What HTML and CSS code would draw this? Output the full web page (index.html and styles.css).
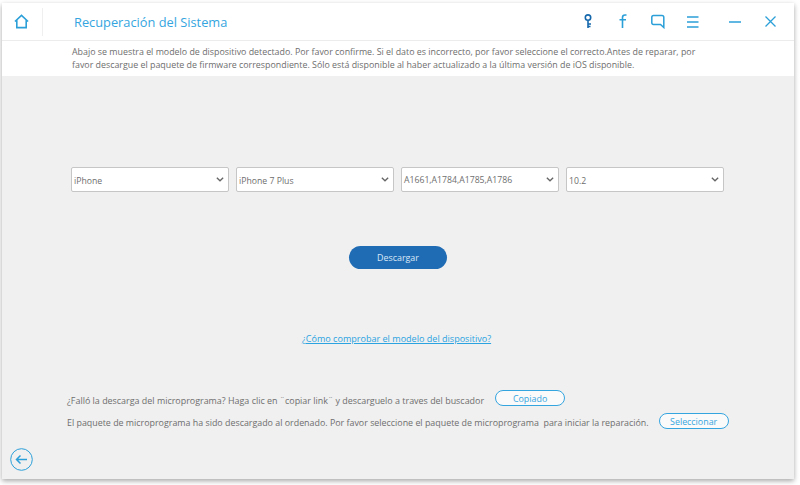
FILE: index.html
```html
<!DOCTYPE html>
<html lang="es">
<head>
<meta charset="utf-8">
<title>Recuperación del Sistema</title>
<link rel="stylesheet" href="styles.css">
</head>
<body>
<div class="window">
  <header class="topbar">
    <div class="home">
      <svg width="15" height="15" viewBox="0 0 16 16" fill="none" stroke="#2b9fd8" stroke-width="1.7"><path d="M1 8 L8 1.5 L15 8 M3 6.5 V14.5 H13 V6.5"/></svg>
    </div>
    <h1 class="title">Recuperación del Sistema</h1>
    <nav class="tools">
      <svg class="t-key" width="10" height="15" viewBox="0 0 10 15" fill="none" stroke="#1668ad" stroke-width="1.6"><circle cx="5" cy="3.6" r="2.7"/><path d="M5 6.5 V14 M5 10 H8 M5 12.5 H7.5"/></svg>
      <svg class="t-f" width="9" height="15" viewBox="0 0 9 15" fill="none" stroke="#2b9fd8" stroke-width="1.6"><path d="M7.5 1 H6 Q3.5 1 3.5 3.5 V14 M0.5 5.8 H7"/></svg>
      <svg class="t-chat" width="14" height="15" viewBox="0 0 14 15" fill="none" stroke="#2b9fd8" stroke-width="1.5"><path d="M2.5 1.5 H11 Q12.8 1.5 12.8 3.3 V13.5 L9.5 10.5 H2.5 Q.8 10.5 .8 8.8 V3.3 Q.8 1.5 2.5 1.5 Z"/></svg>
      <svg class="t-menu" width="12" height="12" viewBox="0 0 12 12" stroke="#2b9fd8" stroke-width="1.4"><path d="M0 1 H11.5 M0 6 H11.5 M0 11 H11.5"/></svg>
      <svg class="t-min" width="12" height="2" viewBox="0 0 12 2" stroke="#2b9fd8" stroke-width="1.5"><path d="M0 1 H12"/></svg>
      <svg class="t-close" width="11" height="11" viewBox="0 0 11 11" stroke="#2b9fd8" stroke-width="1.3"><path d="M.5 .5 L10.5 10.5 M10.5 .5 L.5 10.5"/></svg>
    </nav>
  </header>
  <p class="intro">Abajo se muestra el modelo de dispositivo detectado. Por favor confirme. Si el dato es incorrecto, por favor seleccione el correcto.Antes de reparar, por favor descargue el paquete de firmware correspondiente. Sólo está disponible al haber actualizado a la última versión de iOS disponible.</p>
  <main class="content">
    <div class="selects">
      <div class="select"><span>iPhone</span><svg class="chev" width="8" height="5" viewBox="0 0 9 6" fill="none" stroke="#666" stroke-width="1.6"><path d="M.7 1 L4.5 4.6 L8.3 1"/></svg></div>
      <div class="select"><span>iPhone 7 Plus</span><svg class="chev" width="8" height="5" viewBox="0 0 9 6" fill="none" stroke="#666" stroke-width="1.6"><path d="M.7 1 L4.5 4.6 L8.3 1"/></svg></div>
      <div class="select"><span class="model">A1661,A1784,A1785,A1786</span><svg class="chev" width="8" height="5" viewBox="0 0 9 6" fill="none" stroke="#666" stroke-width="1.6"><path d="M.7 1 L4.5 4.6 L8.3 1"/></svg></div>
      <div class="select"><span>10.2</span><svg class="chev" width="8" height="5" viewBox="0 0 9 6" fill="none" stroke="#666" stroke-width="1.6"><path d="M.7 1 L4.5 4.6 L8.3 1"/></svg></div>
    </div>
    <div class="download"><button class="btn-primary">Descargar</button></div>
    <div class="help"><a href="#">¿Cómo comprobar el modelo del dispositivo?</a></div>
    <div class="row row-first"><span>¿Falló la descarga del microprograma? Haga clic en ¨copiar link¨ y descarguelo a traves del buscador</span><button class="btn-outline btn-copy">Copiado</button></div>
    <div class="row row-second"><span>El paquete de microprograma ha sido descargado al ordenado. Por favor seleccione el paquete de microprograma&nbsp; para iniciar la reparación.</span><button class="btn-outline btn-pick">Seleccionar</button></div>
    <div class="back">
      <svg width="23" height="23" viewBox="0 0 23 23" fill="none" stroke="#2b9fd8"><circle cx="11.5" cy="11.5" r="10.8" stroke-width="1"/><path d="M17 11.5 H6.5 M10.5 7.5 L6.5 11.5 L10.5 15.5" stroke-width="1.5"/></svg>
    </div>
  </main>
</div>
</body>
</html>
```
FILE: styles.css
```css
* { box-sizing: border-box; }
html, body { margin: 0; height: 100%; }
body {
  background: #fff;
  font-family: "Open Sans", sans-serif;
  color: #6e6e6e;
  padding: 3px 6px 6px 2px;
  overflow: hidden;
}
.window {
  height: 476px;
  display: flex;
  flex-direction: column;
  background: #fff;
  box-shadow: 0 2px 5px rgba(0,0,0,.35);
}
.topbar {
  height: 38px;
  flex: none;
  display: flex;
  align-items: center;
  border-bottom: 1px solid #ececec;
}
.home {
  width: 41px;
  height: 28px;
  flex: none;
  display: flex;
  align-items: center;
  padding-left: 12px;
  border-right: 1px solid #efefef;
}
.title {
  margin: 0 0 0 31px;
  font-size: 12.8px;
  font-weight: 400;
  color: #35a5e0;
}
.tools {
  margin-left: auto;
  display: flex;
  align-items: center;
  padding-right: 18px;
}
.t-f { margin-left: 26px; }
.t-chat { margin-left: 23.5px; }
.t-menu { margin-left: 22px; }
.t-min { margin-left: 30px; }
.t-close { margin-left: 24px; }
.intro {
  margin: 0;
  height: 35px;
  flex: none;
  padding: 5px 90px 0 70px;
  font-size: 8.87px;
  line-height: 13px;
}
.content {
  flex: 1;
  background: #f0f0f0;
  display: flex;
  flex-direction: column;
  padding: 0 0 0 65px;
  position: relative;
  font-size: 8.93px;
}
.selects {
  display: flex;
  gap: 7px;
  margin-top: 91px;
  margin-left: 4px;
}
.select {
  width: 158px;
  height: 25px;
  padding: 2px 4px 0 2px;
  background: #fff;
  border: 1px solid #c6c6c6;
  border-radius: 2px;
  display: flex;
  align-items: center;
  justify-content: space-between;
  font-size: 8.7px;
}
.chev { margin-top: -2px; }
.model { margin-top: -1px; }
.download {
  display: flex;
  justify-content: center;
  margin-top: 54px;
  padding-right: 65px;
}
.btn-primary {
  width: 98px;
  height: 23px;
  border: 0;
  border-radius: 12px;
  background: #1f6cb5;
  color: #dbe8f5;
  font: 8.9px "Open Sans", sans-serif;
}
.help {
  margin-top: 63px;
  padding-right: 68px;
  text-align: center;
  line-height: 14px;
}
.help a { color: #2ba3e0; font-size: 9.05px; }
.row {
  display: flex;
  align-items: center;
  height: 16px;
}
.row-first { margin-top: 46px; }
.row-second { margin-top: 6px; font-size: 8.9px; }
.btn-outline {
  height: 16px;
  border: 1px solid #35a5e0;
  border-radius: 8px;
  background: #fafafa;
  color: #35a5e0;
  font: 8.9px "Open Sans", sans-serif;
  padding: 0;
  position: relative;
}
.btn-copy { width: 70px; margin-left: 11px; top: -2px; }
.btn-pick { width: 70px; margin-left: 10px; top: -1px; }
.back {
  position: absolute;
  left: 8px;
  bottom: 8px;
  width: 23px;
  height: 23px;
}
```
